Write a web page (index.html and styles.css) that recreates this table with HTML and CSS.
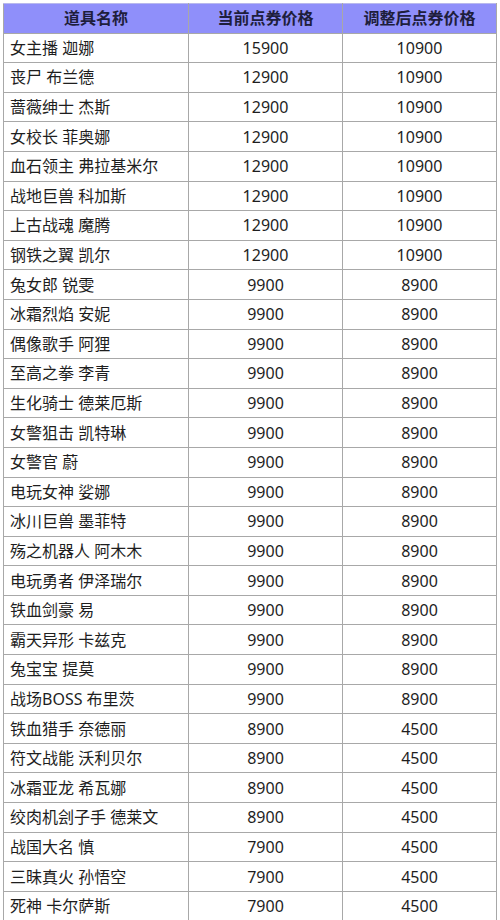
FILE: index.html
```html
<!DOCTYPE html>
<html lang="zh-CN">
<head>
<meta charset="utf-8">
<title>点券价格调整</title>
<link rel="stylesheet" href="styles.css">
</head>
<body>
<table class="price-table">
  <colgroup>
    <col class="c-name">
    <col class="c-cur">
    <col class="c-new">
  </colgroup>
  <thead>
    <tr><th>道具名称</th><th>当前点券价格</th><th>调整后点券价格</th></tr>
  </thead>
  <tbody>
    <tr><td class="name">女主播 迦娜</td><td>15900</td><td>10900</td></tr>
    <tr><td class="name">丧尸 布兰德</td><td>12900</td><td>10900</td></tr>
    <tr><td class="name">蔷薇绅士 杰斯</td><td>12900</td><td>10900</td></tr>
    <tr><td class="name">女校长 菲奥娜</td><td>12900</td><td>10900</td></tr>
    <tr><td class="name">血石领主 弗拉基米尔</td><td>12900</td><td>10900</td></tr>
    <tr><td class="name">战地巨兽 科加斯</td><td>12900</td><td>10900</td></tr>
    <tr><td class="name">上古战魂 魔腾</td><td>12900</td><td>10900</td></tr>
    <tr><td class="name">钢铁之翼 凯尔</td><td>12900</td><td>10900</td></tr>
    <tr><td class="name">兔女郎 锐雯</td><td>9900</td><td>8900</td></tr>
    <tr><td class="name">冰霜烈焰 安妮</td><td>9900</td><td>8900</td></tr>
    <tr><td class="name">偶像歌手 阿狸</td><td>9900</td><td>8900</td></tr>
    <tr><td class="name">至高之拳 李青</td><td>9900</td><td>8900</td></tr>
    <tr><td class="name">生化骑士 德莱厄斯</td><td>9900</td><td>8900</td></tr>
    <tr><td class="name">女警狙击 凯特琳</td><td>9900</td><td>8900</td></tr>
    <tr><td class="name">女警官 蔚</td><td>9900</td><td>8900</td></tr>
    <tr><td class="name">电玩女神 娑娜</td><td>9900</td><td>8900</td></tr>
    <tr><td class="name">冰川巨兽 墨菲特</td><td>9900</td><td>8900</td></tr>
    <tr><td class="name">殇之机器人 阿木木</td><td>9900</td><td>8900</td></tr>
    <tr><td class="name">电玩勇者 伊泽瑞尔</td><td>9900</td><td>8900</td></tr>
    <tr><td class="name">铁血剑豪 易</td><td>9900</td><td>8900</td></tr>
    <tr><td class="name">霸天异形 卡兹克</td><td>9900</td><td>8900</td></tr>
    <tr><td class="name">兔宝宝 提莫</td><td>9900</td><td>8900</td></tr>
    <tr><td class="name">战场BOSS 布里茨</td><td>9900</td><td>8900</td></tr>
    <tr><td class="name">铁血猎手 奈德丽</td><td>8900</td><td>4500</td></tr>
    <tr><td class="name">符文战能 沃利贝尔</td><td>8900</td><td>4500</td></tr>
    <tr><td class="name">冰霜亚龙 希瓦娜</td><td>8900</td><td>4500</td></tr>
    <tr><td class="name">绞肉机刽子手 德莱文</td><td>8900</td><td>4500</td></tr>
    <tr><td class="name">战国大名 慎</td><td>7900</td><td>4500</td></tr>
    <tr><td class="name">三昧真火 孙悟空</td><td>7900</td><td>4500</td></tr>
    <tr><td class="name">死神 卡尔萨斯</td><td>7900</td><td>4500</td></tr>
  </tbody>
</table>
</body>
</html>
```

FILE: styles.css
```css
html, body {
  margin: 0;
  padding: 0;
  background: #ffffff;
}

body {
  padding: 3px 0 0 3px;
  font-family: "Noto Sans", "Noto Sans CJK SC", sans-serif;
  color: #1e1e1e;
}

.price-table {
  width: 493px;
  border-collapse: collapse;
  table-layout: fixed;
  font-size: 16px;
}

.c-name { width: 185px; }
.c-cur { width: 154px; }
.c-new { width: 154px; }

.price-table th,
.price-table td {
  border: 1px solid #a8a8a8;
  height: 28.6px;
  padding: 0 5px;
  text-align: center;
  line-height: 1;
  white-space: nowrap;
}

.price-table th {
  background: #8f8ffa;
  color: #1e1e3c;
  font-weight: bold;
  border-top-color: #b8b8ee;
}

.price-table td.name {
  text-align: left;
  padding-left: 6px;
}
```
